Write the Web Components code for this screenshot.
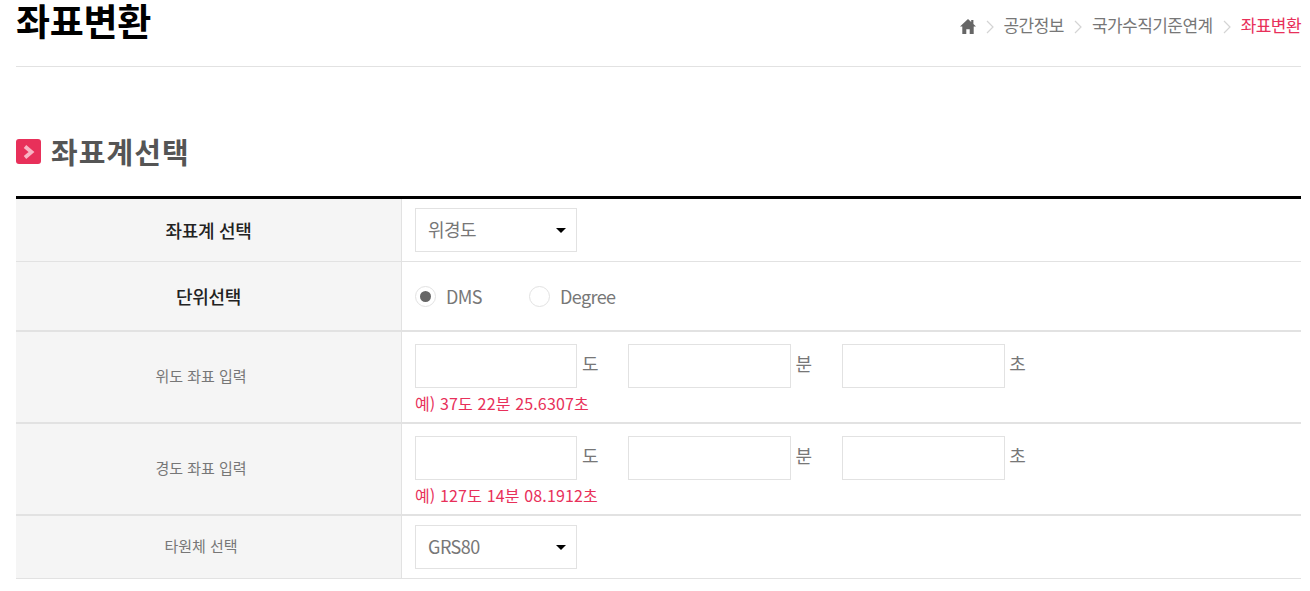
<!DOCTYPE html>
<html lang="ko">
<head>
<meta charset="utf-8">
<title>좌표변환</title>
<style>
    html, body { margin: 0; background: #fff; }
    body {
        padding: 0 9px 0 16px;
        overflow: hidden;
        font-family: "Noto Sans CJK KR", "Noto Sans", sans-serif;
        color: #666;
    }
</style>
</head>
<body>
<page-header heading="좌표변환">
    <bread-crumb trail="공간정보|국가수직기준연계" current="좌표변환"></bread-crumb>
</page-header>
<section-title>좌표계선택</section-title>
<form-table>
    <form-row label="좌표계 선택" strong height="62">
        <select-box value="위경도"></select-box>
    </form-row>
    <form-row label="단위선택" strong height="68" thick>
        <radio-opt checked>DMS</radio-opt>
        <radio-opt>Degree</radio-opt>
    </form-row>
    <form-row label="위도 좌표 입력" height="90" thick>
        <dms-input hint="예) 37도 22분 25.6307초"></dms-input>
    </form-row>
    <form-row label="경도 좌표 입력" height="90" thick>
        <dms-input hint="예) 127도 14분 08.1912초"></dms-input>
    </form-row>
    <form-row label="타원체 선택" height="62">
        <select-box value="GRS80"></select-box>
    </form-row>
</form-table>

<script>
    // Small helper so each element only declares its markup
    function define(name, render) {
        customElements.define(name, class extends HTMLElement {
            connectedCallback() {
                if (!this.shadowRoot) {
                    this.attachShadow({ mode: 'open' }).innerHTML = render(this);
                }
            }
        });
    }

    define('page-header', el => `
        <style>
            :host { display: flex; justify-content: space-between; height: 66px; border-bottom: 1px solid #e2e2e2; }
            h1 { margin: 0; font-size: 37px; line-height: 40px; font-weight: 700; color: #000; letter-spacing: -0.3px; }
        </style>
        <h1>${el.getAttribute('heading')}</h1>
        <slot></slot>`);

    define('bread-crumb', el => {
        const sep = `<svg width="8" height="14" viewBox="0 0 8 14"><path d="M1 1l6 6-6 6" fill="none" stroke="#d4d4d4" stroke-width="1.2"/></svg>`;
        const links = el.getAttribute('trail').split('|').map(t => `${sep}<span>${t}</span>`).join('');
        return `
        <style>
            :host { display: flex; align-items: center; gap: 10px; height: 48px; font-size: 17px; letter-spacing: -0.55px; color: #777; }
            b { font-weight: 400; color: #e8305a; }
            svg { display: block; margin-top: 5px; }
        </style>
        <svg width="16" height="15" viewBox="0 0 16 15"><path d="M8 0L0 7.6h2.3V15h4v-4.8h3.4V15h4V7.6H16l-2.6-2.5V1h-2.2v2L8 0z" fill="#666"/></svg>
        ${links}${sep}<b>${el.getAttribute('current')}</b>`;
    });

    define('section-title', () => `
        <style>
            :host { display: flex; align-items: center; gap: 10px; margin-top: 59px; height: 50px; margin-bottom: 20px;
                font-size: 29px; font-weight: 700; color: #555; letter-spacing: 1.1px; }
            i { margin-top: 1px; width: 25px; height: 25px; border-radius: 3px; background: #e8305a; display: flex; align-items: center; justify-content: center; }
        </style>
        <i><svg width="12" height="14" viewBox="0 0 12 14"><path d="M2 1.5L8.5 7 2 12.5" fill="none" stroke="#f8b4c4" stroke-width="3.8"/></svg></i>
        <slot></slot>`);

    define('form-table', () => `
        <style>:host { display: block; border-top: 3px solid #000; }</style>
        <slot></slot>`);

    define('form-row', el => `
        <style>
            :host { display: grid; grid-template-columns: 386px 1fr; box-sizing: border-box;
                height: ${Number(el.getAttribute('height')) + (el.hasAttribute('thick') ? 2 : 1)}px;
                border-bottom: ${el.hasAttribute('thick') ? 2 : 1}px solid #e2e2e2; }
            .th { background: #f5f5f5; border-right: 1px solid #e2e2e2; display: flex; align-items: center; justify-content: center;
                padding-right: ${el.hasAttribute('strong') ? 0 : 15}px;
                padding-bottom: ${el.hasAttribute('strong') ? 1 : 4}px;
                font-size: ${el.hasAttribute('strong') ? 18 : 15}px; letter-spacing: ${el.hasAttribute('strong') ? -0.3 : 0}px;
                font-weight: ${el.hasAttribute('strong') ? 500 : 400}; color: ${el.hasAttribute('strong') ? '#222' : '#777'}; }
            .td { display: flex; align-items: center; padding-left: 13px; }
        </style>
        <div class="th">${el.getAttribute('label')}</div>
        <div class="td"><slot></slot></div>`);

    define('select-box', el => `
        <style>
            :host { display: flex; align-items: center; justify-content: space-between; box-sizing: border-box; width: 162px; height: 44px;
                padding: 0 10px 0 12px; border: 1px solid #e2e2e2; font-size: 18px; color: #777; letter-spacing: -0.5px; }
            span { margin-top: -2px; }
            i { width: 0; height: 0; border: 5px solid transparent; border-top-color: #000; border-bottom: 0; }
        </style>
        <span>${el.getAttribute('value')}</span><i></i>`);

    define('radio-opt', el => `
        <style>
            :host { display: flex; align-items: center; gap: 10px; width: 114px; font-size: 18px; color: #777; letter-spacing: -0.6px; }
            i { flex: none; box-sizing: border-box; width: 21px; height: 21px; border-radius: 50%; border: 1px solid #e2e2e2; display: flex; align-items: center; justify-content: center; }
            u { width: 11px; height: 11px; border-radius: 50%; background: #666; }
        </style>
        <i>${el.hasAttribute('checked') ? '<u></u>' : ''}</i><slot></slot>`);

    define('dms-input', el => {
        const field = unit => `<span class="f"><i></i><em>${unit}</em></span>`;
        return `
        <style>
            :host { display: block; padding-top: 4px; }
            .r { display: flex; margin-left: -0.2px; }
            .f { display: flex; width: 213.6px; font-size: 18px; color: #777; }
            i { flex: none; box-sizing: border-box; width: 162.65px; height: 44px; border: 1px solid #e2e2e2; }
            em { font-style: normal; margin-left: 4.5px; line-height: 38px; }
            p { margin: 3px 0 0; font-size: 16px; line-height: 24px; color: #e8305a; letter-spacing: 0.15px; }
        </style>
        <div class="r">${field('도')}${field('분')}${field('초')}</div>
        <p>${el.getAttribute('hint')}</p>`;
    });
</script>
</body>
</html>
